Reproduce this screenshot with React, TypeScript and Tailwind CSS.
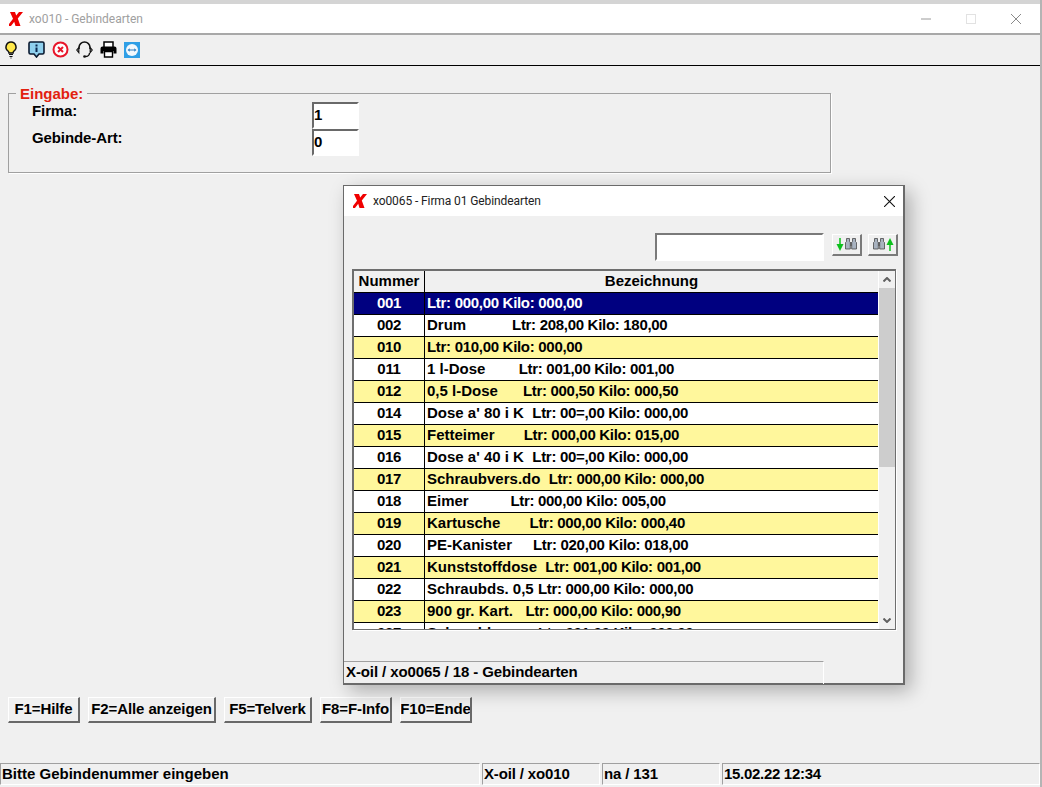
const rows: [string, string, string][] = [
  ["001", "", "Ltr: 000,00 Kilo: 000,00"],
  ["002", "Drum           ", "Ltr: 208,00 Kilo: 180,00"],
  ["010", "", "Ltr: 010,00 Kilo: 000,00"],
  ["011", "1 l-Dose        ", "Ltr: 001,00 Kilo: 001,00"],
  ["012", "0,5 l-Dose      ", "Ltr: 000,50 Kilo: 000,50"],
  ["014", "Dose a' 80 i K  ", "Ltr: 00=,00 Kilo: 000,00"],
  ["015", "Fetteimer       ", "Ltr: 000,00 Kilo: 015,00"],
  ["016", "Dose a' 40 i K  ", "Ltr: 00=,00 Kilo: 000,00"],
  ["017", "Schraubvers.do  ", "Ltr: 000,00 Kilo: 000,00"],
  ["018", "Eimer          ", "Ltr: 000,00 Kilo: 005,00"],
  ["019", "Kartusche       ", "Ltr: 000,00 Kilo: 000,40"],
  ["020", "PE-Kanister     ", "Ltr: 020,00 Kilo: 018,00"],
  ["021", "Kunststoffdose  ", "Ltr: 001,00 Kilo: 001,00"],
  ["022", "Schraubds. 0,5 ", "Ltr: 000,00 Kilo: 000,00"],
  ["023", "900 gr. Kart.   ", "Ltr: 000,00 Kilo: 000,90"],
  ["027", "Schraubkan.     ", "Ltr: 001,00 Kilo: 000,00"],
];

function XLogo({ className }: { className: string }) {
  return (
    <svg viewBox="0 0 14 14" className={className}>
      <polygon fill="#f00000" points="1,0 6,0 7.2,3.6 10,0 14,0 8.8,6.4 11.5,14 6.5,14 5.2,9.8 2,14 0,14 0,12 4,6.8" />
    </svg>
  );
}

function Binoculars({ x }: { x: number }) {
  return (
    <g transform={`translate(${x} 0)`}>
      <path d="M1.500 1.500h3v3l.8 1v6.500H.5V5.500l1-1z" fill="#a9b3c0" stroke="#4a4a4a" strokeWidth=".8" />
      <path d="M7.500 1.500h3v3l1 1v6.500H6.700V5.500l.8-1z" fill="#a9b3c0" stroke="#4a4a4a" strokeWidth=".8" />
      <path d="M5.300 5h1.400v4H5.300z" fill="#555" />
    </g>
  );
}

function FButton({ label, className }: { label: string; className: string }) {
  return (
    <div className={`flex h-[26px] items-center justify-center overflow-hidden whitespace-nowrap border border-t-white border-l-white border-r-2 border-b-2 border-r-[#696969] border-b-[#696969] bg-[#f0f0f0] text-[15px] font-bold tracking-[-0.1px] ${className}`}>
      {label}
    </div>
  );
}

function StatusCell({ label, className }: { label: string; className: string }) {
  return (
    <div className={`flex h-[22px] items-center overflow-hidden whitespace-nowrap border border-t-[#a0a0a0] border-l-[#a0a0a0] border-r-white border-b-white pl-[1px] text-[15px] font-bold ${className}`}>
      {label}
    </div>
  );
}

export default function App() {
  return (
    <div className="relative flex h-[787px] w-[1042px] flex-col overflow-hidden border-r-2 border-r-[#b4b4b4] bg-[#f0f0f0] text-black" style={{ fontFamily: '"Liberation Sans", Arial, sans-serif' }}>
      {/* Main title bar */}
      <div className="h-[4px] bg-[#d4d4d4]" />
      <div className="flex h-[31px] items-center border-b-2 border-b-[#a8a8a8] bg-white pl-[9px]">
        <XLogo className="h-[14px] w-[14px]" />
        <span className="ml-[6px] text-[12px] text-[#a0a0a0]" style={{ fontFamily: 'Roboto, sans-serif' }}>xo010 - Gebindearten</span>
        <div className="ml-auto flex items-center">
          <svg viewBox="0 0 10 10" className="mr-[35px] h-[10px] w-[10px]"><path d="M0 5h10" stroke="#9a9a9a" strokeWidth="1" /></svg>
          <svg viewBox="0 0 10 10" className="mr-[35px] h-[10px] w-[10px]"><rect x=".5" y=".5" width="9" height="9" fill="none" stroke="#e2e2e2" /></svg>
          <svg viewBox="0 0 10 10" className="mr-[19px] h-[10px] w-[10px]"><path d="M0 0l10 10M10 0L0 10" stroke="#8a8a8a" strokeWidth="1" /></svg>
        </div>
      </div>
      {/* Toolbar */}
      <div className="flex h-[31px] items-center gap-[7px] border-b border-b-black pb-[1px] pl-[4px]">
        <svg viewBox="1 0 17 18" className="h-[18px] w-[17px]">
          <path d="M8 1a5 5 0 0 0-3 9c.7.6 1 1.2 1 2h4c0-.8.3-1.4 1-2a5 5 0 0 0-3-9z" fill="#ffe84a" stroke="#111" strokeWidth="1.500" />
          <path d="M6 13.500h4M6.500 15.500h3M7.500 17h1" stroke="#111" strokeWidth="1" />
        </svg>
        <svg viewBox="0 0 17 17" className="h-[17px] w-[17px]">
          <path d="M2.500 1h12A1.500 1.500 0 0 1 16 2.500v9a1.500 1.500 0 0 1-1.500 1.500H11l-2.500 3L6 13H2.500A1.500 1.500 0 0 1 1 11.500v-9A1.500 1.500 0 0 1 2.500 1z" fill="#8fd0ee" stroke="#0a1a30" strokeWidth="1.600" />
          <path d="M7.500 3.500h2v2h-2zM7.500 6.500h2v4.500h-2z" fill="#0a2850" />
        </svg>
        <svg viewBox="0 0 17 17" className="h-[17px] w-[17px]">
          <circle cx="8.500" cy="8.500" r="7" fill="#fff" stroke="#e8162a" strokeWidth="2" />
          <path d="M6 6l5 5M11 6l-5 5" stroke="#e8162a" strokeWidth="2" />
        </svg>
        <svg viewBox="0 0 17 17" className="h-[17px] w-[17px]">
          <path d="M3 8V6.500a5.500 5.500 0 0 1 11 0V8" fill="none" stroke="#111" strokeWidth="1.500" />
          <path d="M2.800 6.500L.8 9l2 2.500zM14.200 6.500l2 2.500-2 2.500z" fill="#fff" stroke="#111" strokeWidth="1.200" />
          <path d="M13.500 12c0 2.500-2 3.500-4.500 3.500" fill="none" stroke="#111" strokeWidth="1.300" />
          <circle cx="8.500" cy="15.500" r="1.300" fill="#111" />
        </svg>
        <svg viewBox="0 0 17 17" className="h-[17px] w-[17px]">
          <path d="M4 6V1h9v5" fill="#fff" stroke="#000" strokeWidth="1.500" />
          <path d="M2.500 5.500h12A2 2 0 0 1 16.500 7.500v5h-3V10h-10v2.500h-3v-5a2 2 0 0 1 2-2z" fill="#000" />
          <path d="M4.500 10.500h8v5.500h-8z" fill="#fff" stroke="#000" strokeWidth="1.400" />
        </svg>
        <svg viewBox="0 0 16 16" className="h-[16px] w-[16px]">
          <rect width="16" height="16" fill="#2f9fe6" />
          <circle cx="8" cy="8" r="6" fill="#f4f9fd" />
          <path d="M3.500 8l2.200-1.800v1.200h4.600V6.200L12.500 8l-2.200 1.800V8.600H5.700v1.200z" fill="#2f7fc0" />
        </svg>
      </div>
      {/* Main content */}
      <div className="flex flex-1 flex-col px-[8px]">
        <fieldset className="mt-[20px] mb-[1px] h-[87px] w-[823px] border border-[#a0a0a0] pl-[8px] shadow-[1px_1px_0_#fff]">
          <legend className="-ml-[1px] px-[4px] text-[15px] leading-[15px] font-bold text-[#e2200f]">Eingabe:</legend>
          <div className="flex">
            <div className="-mt-[1px] ml-[15px] flex w-[280px] flex-col text-[15px] font-bold tracking-[-0.1px]">
              <div className="h-[27px]">Firma:</div>
              <div className="h-[27px]">Gebinde-Art:</div>
            </div>
            <div className="mt-[1px] flex flex-col text-[15px] font-bold">
              <div className="flex h-[27px] w-[47px] items-center border-2 border-[#696969] border-r-white border-b-white bg-white">1</div>
              <div className="flex h-[27px] w-[47px] items-center border-2 border-[#696969] border-r-white border-b-white bg-white">0</div>
            </div>
          </div>
        </fieldset>
        <div className="mt-[523px] flex gap-[8px]">
          <FButton label="F1=Hilfe" className="w-[72px]" />
          <FButton label="F2=Alle anzeigen" className="w-[128px]" />
          <FButton label="F5=Telverk" className="w-[88px]" />
          <FButton label="F8=F-Info" className="w-[72px]" />
          <FButton label="F10=Ende" className="w-[72px]" />
        </div>
      </div>
      {/* Status bar */}
      <div className="mb-[2px] flex gap-[2px]">
        <StatusCell label="Bitte Gebindenummer eingeben" className="w-[480px]" />
        <StatusCell label="X-oil / xo010" className="w-[118px] tracking-[-0.15px]" />
        <StatusCell label="na / 131" className="w-[118px] tracking-[-0.15px]" />
        <StatusCell label="15.02.22 12:34" className="flex-1 tracking-[-0.3px]" />
      </div>

      {/* Floating dialog */}
      <div className="absolute top-[185px] left-[343px] flex h-[500px] w-[562px] flex-col border border-r-2 border-b-2 border-[#6a6a6a] bg-[#f0f0f0] shadow-[6px_6px_18px_rgba(0,0,0,0.28)]">
        <div className="flex h-[30px] shrink-0 items-center bg-white pl-[9px]">
          <XLogo className="h-[14px] w-[14px]" />
          <span className="ml-[6px] text-[12px] tracking-[-0.1px] text-[#222]" style={{ fontFamily: 'Roboto, sans-serif' }}>xo0065 - Firma 01 Gebindearten</span>
          <svg viewBox="0 0 10 10" className="mr-[8px] ml-auto h-[11px] w-[11px]"><path d="M0 0l10 10M10 0L0 10" stroke="#111" strokeWidth="1" /></svg>
        </div>
        <div className="mt-[17px] flex h-[28px] items-start pr-[5px]">
          <div className="ml-auto h-[28px] w-[169px] border-2 border-[#7a7a7a] border-r-white border-b-white bg-white" />
          <div className="mt-[1px] ml-[8px] flex h-[22px] w-[30px] items-center justify-center border border-t-white border-l-white border-r-2 border-b-2 border-r-[#7a7a7a] border-b-[#7a7a7a]">
            <svg viewBox="0 0 24 15" className="h-[15px] w-[24px]">
              <path d="M5 1v7" stroke="#0cc01c" strokeWidth="1.500" /><path d="M1.500 7h7l-3.500 7z" fill="#0cc01c" />
              <Binoculars x={10} />
            </svg>
          </div>
          <div className="mt-[1px] ml-[6px] flex h-[22px] w-[30px] items-center justify-center border border-t-white border-l-white border-r-2 border-b-2 border-r-[#7a7a7a] border-b-[#7a7a7a]">
            <svg viewBox="0 0 24 15" className="h-[15px] w-[24px]">
              <Binoculars x={2} />
              <path d="M19 7v7" stroke="#0cc01c" strokeWidth="1.500" /><path d="M15.500 8h7l-3.500-7z" fill="#0cc01c" />
            </svg>
          </div>
        </div>
        {/* Table */}
        <div className="mt-[8px] ml-[8px] flex h-[361px] w-[544px] border border-t-2 border-l-2 border-[#6e6e6e] text-[15px] font-bold shadow-[1px_1px_0_#fff]">
          <div className="h-full w-[525px] overflow-hidden border-r border-r-white">
            <div className="flex h-[22px] border-b border-b-black">
              <div className="flex w-[71px] items-center justify-center border-r border-r-black">Nummer</div>
              <div className="flex flex-1 items-center justify-center">Bezeichnung</div>
            </div>
            {rows.map(([n, name, values], i) => (
              <div key={n} className={`flex h-[22px] border-b border-b-black ${i === 0 ? "bg-[#000080] text-white" : i % 2 === 0 ? "bg-[#fff79c]" : "bg-white"}`}>
                <div className="flex w-[71px] items-center justify-center border-r border-r-black tracking-[-0.3px]">{n}</div>
                <div className="flex flex-1 items-center pl-[2px] whitespace-pre">
                  <span>{name}</span>
                  <span className="tracking-[-0.3px]">{values}</span>
                </div>
              </div>
            ))}
          </div>
          <div className="flex h-full w-[16px] flex-col bg-[#f0f0f0]">
            <div className="flex h-[17px] items-center justify-center">
              <svg viewBox="0 0 8 5" className="h-[5px] w-[8px]"><path d="M.5 4.500L4 1l3.500 3.500" fill="none" stroke="#606060" strokeWidth="2" /></svg>
            </div>
            <div className="h-[179px] bg-[#cdcdcd]" />
            <div className="mt-auto flex h-[17px] items-center justify-center">
              <svg viewBox="0 0 8 5" className="h-[5px] w-[8px]"><path d="M.5.5L4 4l3.500-3.500" fill="none" stroke="#606060" strokeWidth="2" /></svg>
            </div>
          </div>
        </div>
        <div className="mt-[31px] flex h-[23px] w-[480px] items-center border-t border-r border-t-[#a0a0a0] border-r-white pb-[1px] text-[15px] font-bold tracking-[-0.1px]">
          <span className="pl-[2px]">X-oil / xo0065 / 18 - Gebindearten</span>
        </div>
      </div>
    </div>
  );
}
